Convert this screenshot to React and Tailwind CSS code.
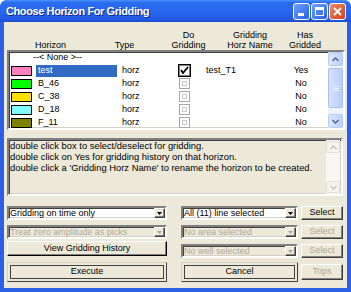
import React from "react";

const rows = [
  { name: "test", color: "#ff80c0", gridName: "test_T1", has: "Yes", checked: true, selected: true },
  { name: "B_46", color: "#00ff00", gridName: "", has: "No" },
  { name: "C_38", color: "#ffe000", gridName: "", has: "No" },
  { name: "D_18", color: "#80ffff", gridName: "", has: "No" },
  { name: "F_11", color: "#808000", gridName: "", has: "No" },
];

const sunken =
  "border-2 border-t-[#808080] border-l-[#808080] border-b-white border-r-white shadow-[inset_1px_1px_0_#404040,inset_-1px_-1px_0_#d4d0c8]";
const raised =
  "border border-t-white border-l-white border-b-[#404040] border-r-[#404040] shadow-[inset_-1px_-1px_0_#808080]";

const CheckBox = ({ checked }) =>
  checked ? (
    <svg width="13" height="13" viewBox="0 0 13 13">
      <rect x="0.5" y="0.5" width="12" height="12" fill="#fff" stroke="#000" />
      <rect x="1.5" y="1.5" width="10" height="10" fill="none" stroke="#808080" />
      <path d="M3 6 L5 9 L10 3" fill="none" stroke="#000" strokeWidth="1.8" />
    </svg>
  ) : (
    <svg width="13" height="13" viewBox="0 0 13 13">
      <rect x="1.5" y="1.5" width="10" height="10" fill="#fff" stroke="#a8a8a8" />
      <rect x="4.5" y="4.5" width="4" height="4" fill="none" stroke="#c8c8c8" />
    </svg>
  );

const Arrow = ({ up, color = "#4d6185" }) => (
  <svg width="7" height="5" viewBox="0 0 7 5">
    <path d={up ? "M0.5 4 L3.5 1 L6.5 4" : "M0.5 1 L3.5 4 L6.5 1"} fill="none" stroke={color} strokeWidth="1.4" />
  </svg>
);

const Combo = ({ text, disabled }) => (
  <div className={`flex h-[14px] items-center ${sunken} ${disabled ? "bg-[#ece9d8]" : "bg-white"}`}>
    <span className={`flex-1 truncate pl-[1px] leading-[10px] ${disabled ? "text-[#aca899]" : "text-black"}`}>{text}</span>
    <div className={`flex h-[10px] w-[11px] items-center justify-center bg-[#ece9d8] ${raised}`}>
      <svg width="5" height="3" viewBox="0 0 5 3">
        <path d="M0 0 H5 L2.5 3 Z" fill={disabled ? "#aca899" : "#000"} />
      </svg>
    </div>
  </div>
);

const Button = ({ children, disabled, className = "" }) => (
  <div
    className={`flex items-center justify-center bg-[#ece9d8] ${raised} ${disabled ? "text-[#aca899]" : "text-black"} ${className}`}
  >
    {children}
  </div>
);

const DefaultButton = ({ children, className = "" }) => (
  <div className={`flex border border-t-[#d4d0c8] border-l-[#d4d0c8] border-b-[#404040] border-r-[#404040] p-[2px] ${className}`}>
    <div className="flex flex-1 items-center justify-center border border-[#404040] bg-[#ece9d8] text-black">{children}</div>
  </div>
);

export default function App() {
  return (
    <div className="flex h-[292px] w-[351px] flex-col overflow-hidden rounded-t-[7px] bg-[#2a5fe6] font-['Liberation_Sans',Arial,sans-serif] text-[9px]">
      <div className="flex h-[22px] items-center bg-[linear-gradient(to_bottom,#4a93fb_0%,#2a6cf0_12%,#2866ee_55%,#2258e4_88%,#1a4ccf_100%)] pl-[6px] pr-[5px]">
        <span className="flex-1 text-[11px] font-bold tracking-[-0.4px] text-white [text-shadow:1px_1px_0_#0a2a90]">
          Choose Horizon For Gridding
        </span>
        <div className="flex gap-[1px]">
          <div className="flex h-[17px] w-[17px] items-end justify-start rounded-[3px] border border-white bg-[linear-gradient(135deg,#6ea2ff,#2a5ee8)] pb-[3px] pl-[4px]">
            <div className="h-[3px] w-[6px] bg-white" />
          </div>
          <div className="flex h-[17px] w-[17px] items-center justify-center rounded-[3px] border border-white bg-[linear-gradient(135deg,#6ea2ff,#2a5ee8)]">
            <div className="h-[9px] w-[9px] border border-t-[3px] border-white" />
          </div>
          <div className="flex h-[17px] w-[17px] items-center justify-center rounded-[3px] border border-white bg-[linear-gradient(135deg,#f08a64,#d2401c)]">
            <svg width="9" height="9" viewBox="0 0 9 9">
              <path d="M1 1 L8 8 M8 1 L1 8" stroke="#fff" strokeWidth="1.8" />
            </svg>
          </div>
        </div>
      </div>

      <div className="mx-[4px] mb-[4px] flex flex-1 flex-col bg-[#ece9d8] text-black">
        {/* column headers */}
        <div className="flex h-[28px] items-end text-center leading-[10px]">
          <div className="w-[93px]">Horizon</div>
          <div className="w-[55px]">Type</div>
          <div className="w-[73px]">
            Do
            <br />
            Gridding
          </div>
          <div className="w-[50px]">
            Gridding
            <br />
            Horz Name
          </div>
          <div className="w-[60px]">
            Has
            <br />
            Gridded
          </div>
        </div>

        {/* horizon list */}
        <div className={`ml-[3px] mr-[2px] flex h-[80px] bg-white ${sunken}`}>
          <div className="flex-1 overflow-hidden">
            <div className="flex h-[12px] items-center pl-[24px]">--&lt; None &gt;--</div>
            {rows.map((row) => (
              <div key={row.name} className="flex h-[13px] items-center">
                <div className="ml-[2px] h-[10px] w-[21px] border border-black" style={{ backgroundColor: row.color }} />
                <div
                  className={`ml-[4px] flex h-[12px] w-[81px] items-center pl-[2px] ${
                    row.selected ? "bg-[#316ac5] text-white" : ""
                  }`}
                >
                  {row.name}
                </div>
                <div className="ml-[5px] w-[56px]">horz</div>
                <CheckBox checked={row.checked} />
                <div className="ml-[15px] w-[83px]">{row.gridName}</div>
                <div className="w-[24px] text-center">{row.has}</div>
              </div>
            ))}
          </div>
          <div className="flex w-[15px] flex-col bg-[#eef3fd]">
            <div className="flex h-[14px] items-center justify-center rounded-[2px] border border-[#b7cbf4] bg-[linear-gradient(to_right,#dbe7fd,#bcd0fb)]">
              <Arrow up />
            </div>
            <div className="mt-[2px] flex h-[40px] items-center justify-center rounded-[2px] border border-[#a9bff3] bg-[linear-gradient(to_right,#d6e3fd,#b9cefb)]">
              <div className="flex flex-col gap-[1px]">
                <div className="h-px w-[6px] bg-[#eef4fe]" />
                <div className="h-px w-[6px] bg-[#eef4fe]" />
                <div className="h-px w-[6px] bg-[#eef4fe]" />
              </div>
            </div>
            <div className="flex-1" />
            <div className="flex h-[14px] items-center justify-center rounded-[2px] border border-[#b7cbf4] bg-[linear-gradient(to_right,#dbe7fd,#bcd0fb)]">
              <Arrow />
            </div>
          </div>
        </div>

        {/* help text */}
        <div className={`ml-[3px] mr-[4px] mt-[8px] flex h-[58px] ${sunken}`}>
          <div className="flex-1 pl-[1px] text-[9.4px] leading-[11px]">
            <div>double click box to select/deselect for gridding.</div>
            <div>double click on Yes for gridding history on that horizon.</div>
            <div>double click a 'Gridding Horz Name' to rename the horizon to be created.</div>
          </div>
          <div className="mr-[1px] flex w-[14px] flex-col bg-[#f7f6f2] py-[1px]">
            <div className="flex h-[12px] items-center justify-center rounded-[2px] border border-[#e2e0d8] bg-[#f4f3ee]">
              <Arrow up color="#c4c2b8" />
            </div>
            <div className="flex-1" />
            <div className="flex h-[12px] items-center justify-center rounded-[2px] border border-[#e2e0d8] bg-[#f4f3ee]">
              <Arrow color="#c4c2b8" />
            </div>
          </div>
        </div>

        {/* options */}
        <div className="mt-[10px] flex">
          <div className="ml-[3px] flex w-[160px] flex-col">
            <Combo text="Gridding on time only" />
            <div className="mt-[5px]">
              <Combo text="Treat zero amplitude as picks" disabled />
            </div>
            <Button className="mt-[2px] h-[15px] border-b-black border-r-black">View Gridding History</Button>
            <DefaultButton className="mt-[6px] h-[20px]">Execute</DefaultButton>
          </div>
          <div className="ml-[14px] flex w-[162px] flex-col">
            <div className="flex gap-[3px]">
              <div className="w-[117px]">
                <Combo text="All (11) line selected" />
              </div>
              <Button className="h-[14px] flex-1">Select</Button>
            </div>
            <div className="mt-[5px] flex gap-[3px]">
              <div className="w-[117px]">
                <Combo text="No area selected" disabled />
              </div>
              <Button className="h-[14px] flex-1" disabled>
                Select
              </Button>
            </div>
            <div className="mt-[5px] flex gap-[3px]">
              <div className="w-[117px]">
                <Combo text="No well selected" disabled />
              </div>
              <Button className="h-[14px] flex-1" disabled>
                Select
              </Button>
            </div>
            <div className="mt-[4px] flex items-center gap-[3px]">
              <DefaultButton className="h-[20px] w-[117px]">Cancel</DefaultButton>
              <Button className="h-[16px] flex-1" disabled>
                Tops
              </Button>
            </div>
          </div>
        </div>
      </div>
    </div>
  );
}
